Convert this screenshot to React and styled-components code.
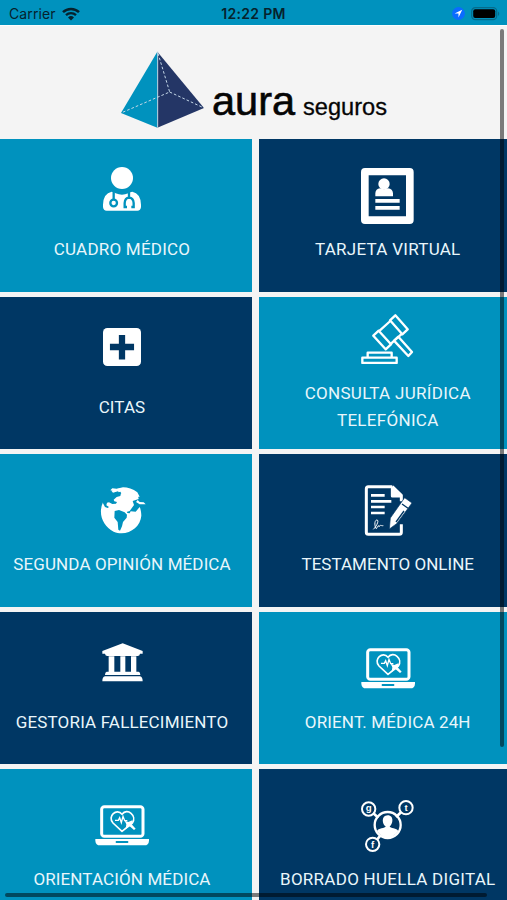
import React from "react";
import styled, { createGlobalStyle } from "styled-components";

const GlobalStyle = createGlobalStyle`
	body {
		margin: 0;
		background: #f4f4f4;
		overflow: hidden;
	}
`;

const Screen = styled.div`
	position: relative;
	width: 507px;
	height: 900px;
	overflow: hidden;
	background: #f4f4f4;
`;

const StatusBar = styled.div`
	display: grid;
	grid-template-columns: 1fr auto 1fr;
	align-items: center;
	box-sizing: border-box;
	height: 26px;
	padding: 2px 6px 0 9px;
	border-bottom: 1px solid #fdfdfd;
	background: #0092be;
	color: #06222d;
	font-family: Inter, sans-serif;
	font-size: 14px;

	svg {
		display: block;
	}
`;

const StatusSide = styled.div`
	display: flex;
	align-items: center;
	justify-content: ${(props) => (props.$end ? "flex-end" : "flex-start")};
	gap: 6px;
`;

const Carrier = styled.span`
	letter-spacing: 0.1px;
`;

const Time = styled.span`
	margin-right: 3px;
	font-size: 14px;
	font-weight: 600;
	letter-spacing: 0.3px;
`;

const Header = styled.header`
	display: flex;
	align-items: flex-start;
	box-sizing: border-box;
	height: 113px;
	padding: 25px 0 0 120px;
`;

const Brand = styled.div`
	padding: 26px 0 0 6px;
	color: #050505;
	font-family: "Liberation Sans", Arial, sans-serif;
	font-size: 41.5px;
	line-height: 48px;
	white-space: nowrap;
	-webkit-text-stroke: 0.6px #050505;

	small {
		margin-left: 8px;
		font-size: 23.6px;
		-webkit-text-stroke-width: 0.3px;
	}
`;

const Grid = styled.main`
	display: grid;
	grid-template-columns: 259px 257.5px;
	grid-auto-rows: 152.6px;
	gap: 5px 7.5px;
	margin-left: -7.5px;
`;

const Tile = styled.div`
	display: flex;
	flex-direction: column;
	align-items: center;
	background: ${(props) => (props.$dark ? "#003764" : "#0092be")};
	color: #e9f6fb;
`;

const IconSlot = styled.div`
	flex: none;
	box-sizing: border-box;
	height: ${(props) => (props.$tall ? 83 : 97)}px;
	padding-top: ${(props) => props.$top}px;

	svg {
		display: block;
	}
`;

const Label = styled.div`
	font-family: Roboto, sans-serif;
	font-size: 17px;
	line-height: 27px;
	letter-spacing: ${(props) => props.$spacing || 0}px;
	text-align: center;
	white-space: pre;
`;

const Scrollbar = styled.div`
	position: absolute;
	border-radius: 2px;
	background: rgba(0, 0, 0, 0.5);
`;

const VerticalBar = styled(Scrollbar)`
	top: 29px;
	left: 499.5px;
	width: 4px;
	height: 718px;
`;

const HorizontalBar = styled(Scrollbar)`
	top: 892.5px;
	left: 5px;
	width: 482px;
	height: 4px;
`;

const Wifi = () => (
	<svg width="18" height="14" viewBox="0 0 18 14" fill="none" stroke="#06222d">
		<path d="M1 5.2a11.5 11.5 0 0 1 16 0" strokeWidth="2.5" />
		<path d="M4 8.2a7.2 7.2 0 0 1 10 0" strokeWidth="2.3" />
		<path d="M9 13.6l-3-3.2a4.3 4.3 0 0 1 6 0z" fill="#06222d" stroke="none" />
	</svg>
);

const Location = () => (
	<svg width="13" height="13" viewBox="0 0 13 13">
		<circle cx="6.5" cy="6.5" r="6.4" fill="#0a6cff" />
		<path d="M10.2 2.8L2.6 6.5h3.9v3.9z" fill="#fff" />
	</svg>
);

const Battery = () => (
	<svg width="30" height="14" viewBox="0 0 30 14">
		<rect x="0.7" y="0.7" width="25" height="12" rx="3.6" fill="none" stroke="#056c8c" strokeWidth="1.2" />
		<rect x="2.2" y="2.3" width="22" height="8.8" rx="2" fill="#000" />
		<path d="M27 4.5q2.5 2.2 0 4.6z" fill="#056c8c" />
	</svg>
);

const Pyramid = () => (
	<svg width="86" height="78" viewBox="31 33 258 234">
		<path d="M143 35L34 219l109 44z" fill="#0092be" />
		<path d="M143 35l140 169-140 59z" fill="#243666" />
		<path d="M144 35v228" stroke="#b7dbe9" strokeWidth="3" />
		<path
			d="M145 40l35 116L34 219M180 156l103 48"
			fill="none"
			stroke="#c4d8e8"
			strokeWidth="3"
			strokeDasharray="8 6"
		/>
	</svg>
);

const Doctor = () => (
	<svg width="38" height="44" viewBox="70 36 114 132">
		<circle cx="127" cy="69" r="33" fill="#fff" />
		<path
			d="M96 110q6 0 12 5 19 8 38 0 6-5 12-5 25 5 26 39v7q-1 11-11 11H81q-10 0-11-11v-7q1-34 26-39z"
			fill="#fff"
		/>
		<g fill="none" stroke="#0092be" strokeWidth="7">
			<path d="M102 108v24" />
			<circle cx="102" cy="144" r="10" />
			<path d="M148 108v18M142 156h-7v-12q1-15 13-16 13 1 14 16v12h-7" />
		</g>
	</svg>
);

const Card = () => (
	<svg width="53" height="56" viewBox="64 38 159 168">
		<path
			d="M76 38h134q12 0 12 12v144q0 12-12 12H76q-12 0-12-12V50q0-12 12-12zM87 60v123h112V60z"
			fill="#fff"
			fillRule="evenodd"
		/>
		<circle cx="133" cy="86" r="17" fill="#fff" />
		<path
			d="M107 123v-9q1-13 14-15 12 5 24 0 14 2 15 15v9zM107 131h73v11h-73zM107 152h73v11h-73z"
			fill="#fff"
		/>
	</svg>
);

const Cross = () => (
	<svg width="38" height="38" viewBox="70 37 115 115">
		<rect x="70" y="37" width="115" height="115" rx="13" fill="#fff" />
		<path d="M118 58h19v27h27v19h-27v28h-19v-28H91V85h27z" fill="#003764" />
	</svg>
);

const Gavel = () => (
	<svg width="53" height="50" viewBox="64 40 159 150" fill="none" stroke="#fff" strokeWidth="7" strokeLinejoin="round">
		<path d="M68 171h103v16H68zM84 156h72v15H84z" />
		<path d="M167 44l37 42-16 15-37-42zM117 90l37 41-16 15-37-41z" />
		<path d="M152 61l-32 29M187 99l-33 30M163 120l13-12 41 46-11 12z" />
	</svg>
);

const Globe = () => (
	<svg width="48" height="47" viewBox="54 36 144 141">
		<path
			d="M69 82c-16 34 0 73 32 88 39 16 80-11 83-48 0-9-2-20-5-26l-12 14-15-1-3 6-7-1-5-14-6-8 1-16 8-5 8 8 4-7-7-7 16-3 9 4 9-1-7-13c-13-10-29-15-43-15l-19 4-13-1-6 6 10 2 13-4 1 8 8 3-2 8-11 3-9 8 2 5 8 2-3 5-11 1-10-5-6 1-2 8 8 5-4 3-8-3-6-11z"
			fill="#fff"
		/>
		<path d="M119 68l18-9 36 0 3 13-18 6 4 12-13 18-12 4-22-10-7-12 8-14z" fill="#fff" />
		<path d="M104 108l13-3 17 7 7 7-1 9-11 13-3 13-6 13-5-3-2-23-10-13z" fill="#0092be" />
		<path d="M94 47l20-6 12 0-7 6-20 6zM168 81l5-6 6 6 12 1 6 6-18 0z" fill="#fff" />
		<path d="M107 54l14-4 3 5-12 6z" fill="#0092be" />
	</svg>
);

const SignedDocument = () => (
	<svg width="49" height="51" viewBox="56 30 147 153">
		<path
			d="M144 35H72q-6 0-6 6v131q0 6 6 6h93q6 0 6-6v-24M144 35l27 26v18M144 36v27h27"
			fill="none"
			stroke="#fff"
			strokeWidth="9"
			strokeLinejoin="round"
		/>
		<path d="M145 35v28h27z" fill="#fff" />
		<path
			d="M84 61h33M84 79h53M84 96h33M84 114h33"
			stroke="#fff"
			strokeWidth="8"
			strokeLinecap="square"
		/>
		<path d="M181 68l22 16-46 62-22 16 3-33z" fill="#fff" stroke="#003764" strokeWidth="2" />
		<path d="M173 87l18 13M155 141l24-33" stroke="#003764" strokeWidth="4" />
		<path
			d="M87 163c10-9 19-29 10-28-8 2-6 22-1 26 6-10 9-12 8-6 5-7 5-2 13-3"
			fill="none"
			stroke="#fff"
			strokeWidth="3"
		/>
	</svg>
);

const Bank = () => (
	<svg width="41" height="39" viewBox="66 37 123 117">
		<path
			d="M128 38l60 23v8h-8q-1 7-7 7H82q-6 0-7-7h-8v-8zM86 77h17v46h18V77h15v46h17V77h16v46h7q5 1 5 10H75q0-9 5-10h6zM75 137h105q8 1 8 15H67q0-14 8-15z"
			fill="#fff"
		/>
	</svg>
);

const Laptop = () => (
	<svg width="54" height="41" viewBox="62 38 162 123">
		<rect x="82" y="43" width="124" height="89" rx="8" fill="none" stroke="#fff" strokeWidth="9" />
		<path d="M63 140h161v5q-1 14-14 14H77q-13 0-14-14z" fill="#fff" />
		<rect x="124" y="146" width="38" height="6" rx="2" fill="#0092be" />
		<path
			d="M143 117l-27-25c-18-20 11-47 27-26 16-21 46 4 31 26l-31 25z"
			fill="none"
			stroke="#fff"
			strokeWidth="5"
			strokeLinejoin="round"
		/>
		<path
			d="M122 84h10l4-8 5 15 5-19 5 13h8"
			fill="none"
			stroke="#fff"
			strokeWidth="4"
		/>
		<path d="M151 85l11 4 12-5-2 12 12 13-5 4-13-11-12 8 2-14z" fill="#fff" />
	</svg>
);

const Network = () => (
	<svg width="53" height="53" viewBox="64 30 159 159">
		<g fill="none" stroke="#fff" strokeWidth="6">
			<path d="M101 70l15 13M185 66l-16 15M111 150l11-13" strokeWidth="8" />
			<circle cx="144" cy="105" r="39" strokeWidth="7" />
			<circle cx="87" cy="57" r="20" />
			<circle cx="199" cy="53" r="20" />
			<circle cx="99" cy="163" r="20" />
		</g>
		<path
			d="M144 76c21 0 15 29 6 33 1 7 22 4 26 15q-32 38-64 0c3-11 25-8 26-15-10-4-15-33 6-33z"
			fill="#fff"
		/>
		<g fill="#fff" fontFamily="Liberation Sans, sans-serif" fontWeight="bold" fontSize="29" textAnchor="middle">
			<text x="87" y="64">g</text>
			<text x="199" y="63">t</text>
			<text x="99" y="173">f</text>
		</g>
	</svg>
);

const options = [
	{ label: "CUADRO MÉDICO", icon: Doctor, top: 28, spacing: 0.23 },
	{ label: "TARJETA VIRTUAL", icon: Card, top: 29, dark: true, spacing: 0.27 },
	{ label: "CITAS", icon: Cross, top: 31, dark: true, spacing: 0.1 },
	{ label: "CONSULTA JURÍDICA\nTELEFÓNICA", icon: Gavel, top: 17, tall: true, spacing: 0.3 },
	{ label: "SEGUNDA OPINIÓN MÉDICA", icon: Globe, top: 33, spacing: 0.11 },
	{ label: "TESTAMENTO ONLINE", icon: SignedDocument, top: 31, dark: true, spacing: 0.03 },
	{ label: "GESTORIA FALLECIMIENTO", icon: Bank, top: 31, dark: true, spacing: 0.17 },
	{ label: "ORIENT. MÉDICA 24H", icon: Laptop, top: 36, spacing: 0.14 },
	{ label: "ORIENTACIÓN MÉDICA", icon: Laptop, top: 36, spacing: 0.12 },
	{ label: "BORRADO HUELLA DIGITAL", icon: Network, top: 31, dark: true, spacing: 0.27 },
];

const App = () => {
	const tiles = options.map(({ label, icon: Icon, top, dark, tall, spacing }) => (
		<Tile key={label} $dark={dark}>
			<IconSlot $top={top} $tall={tall}>
				<Icon />
			</IconSlot>
			<Label $spacing={spacing}>{label}</Label>
		</Tile>
	));

	return (
		<Screen>
			<GlobalStyle />
			<StatusBar>
				<StatusSide>
					<Carrier>Carrier</Carrier>
					<Wifi />
				</StatusSide>
				<Time>12:22 PM</Time>
				<StatusSide $end>
					<Location />
					<Battery />
				</StatusSide>
			</StatusBar>
			<Header>
				<Pyramid />
				<Brand>
					aura<small>seguros</small>
				</Brand>
			</Header>
			<Grid>{tiles}</Grid>
			<VerticalBar />
			<HorizontalBar />
		</Screen>
	);
};

export default App;
